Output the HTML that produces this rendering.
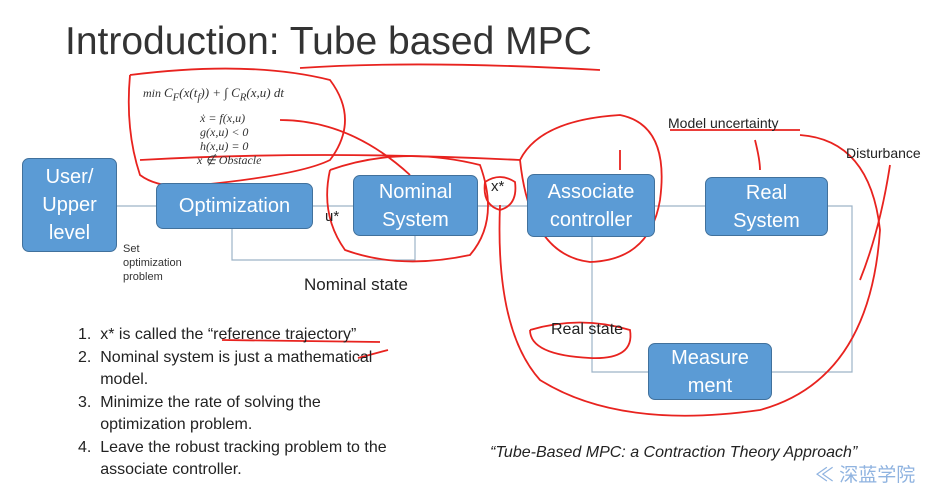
<!DOCTYPE html>
<html><head><meta charset="utf-8"><style>
body{margin:0;width:943px;height:484px;background:#fff;overflow:hidden;position:relative;font-family:"Liberation Sans",sans-serif}
.t{position:absolute;white-space:nowrap}
.b{position:absolute;background:#5b9bd5;border:1px solid #41719c;border-radius:7px;color:#fff;font-size:20px;text-align:center;display:flex;align-items:center;justify-content:center;line-height:28px;box-sizing:border-box}
.m{position:absolute;white-space:nowrap;font-family:"Liberation Serif",serif;font-style:italic;font-size:12px;color:#333;line-height:13px}
</style></head><body>
<div class="t" style="left:65px;top:20px;font-size:39px;color:#333">Introduction: Tube based MPC</div>
<svg style="position:absolute;left:0;top:0" width="943" height="484">
<g stroke="#9db3c8" stroke-width="1.2" fill="none">
<line x1="117" y1="206" x2="156" y2="206"/><line x1="313" y1="206" x2="353" y2="206"/>
<line x1="478" y1="206" x2="527" y2="206"/><line x1="655" y1="206" x2="705" y2="206"/>
<polyline points="828,206 852,206 852,372 772,372"/><polyline points="648,372 592,372 592,237"/>
<polyline points="415,236 415,260 232,260 232,229"/>
</g>
<g stroke="#e8231f" stroke-width="1.8" fill="none">
<path d="M300 68 Q420 60 600 70"/>
<path d="M130 75 Q250 60 330 80 Q360 120 330 160 Q300 175 200 185 Q160 190 140 175 Q125 130 130 75"/>
<path d="M140 160 Q320 150 520 160"/>
<path d="M280 120 Q350 120 410 175"/>
<path d="M330 170 Q400 145 480 165 Q500 220 470 255 Q400 270 345 250 Q320 215 330 170"/>
<path d="M485 182 Q500 172 515 182 Q518 205 500 210 Q482 205 485 182"/>
<path d="M520 160 Q540 120 620 115 Q670 125 660 200 Q650 260 590 262 Q530 255 520 160"/>
<path d="M500 205 Q495 330 540 380 Q620 430 760 410 Q870 380 880 230 Q870 140 800 135"/>
<path d="M530 330 Q580 315 630 330 Q635 360 590 358 Q530 355 530 330"/>
<path d="M620 150 L620 170 M755 140 Q760 160 760 170 M890 165 Q880 230 860 280"/>
<path d="M222 340 L380 342 M670 130 L800 130 M358 358 L388 350"/>
</g>
</svg>
<div class="m" style="left:143px;top:86px">min <span style="font-size:13px">C<sub>F</sub>(x(t<sub>f</sub>)) + ∫ C<sub>R</sub>(x,u) dt</span></div>
<div class="m" style="left:200px;top:112px">ẋ = f(x,u)</div>
<div class="m" style="left:200px;top:126px">g(x,u) &lt; 0</div>
<div class="m" style="left:200px;top:140px">h(x,u) = 0</div>
<div class="m" style="left:197px;top:154px">x ∉ Obstacle</div>
<div class="b" style="left:22px;top:158px;width:95px;height:94px">User/<br>Upper<br>level</div>
<div class="b" style="left:156px;top:183px;width:157px;height:46px">Optimization</div>
<div class="b" style="left:353px;top:175px;width:125px;height:61px">Nominal<br>System</div>
<div class="b" style="left:527px;top:174px;width:128px;height:63px">Associate<br>controller</div>
<div class="b" style="left:705px;top:177px;width:123px;height:59px">Real<br>System</div>
<div class="b" style="left:648px;top:343px;width:124px;height:57px">Measure<br>ment</div>
<div class="t" style="left:123px;top:242px;font-size:11px;line-height:14px;color:#333">Set<br>optimization<br>problem</div>
<div class="t" style="left:325px;top:208px;font-size:15px;color:#222">u*</div>
<div class="t" style="left:491px;top:178px;font-size:15px;color:#222">x*</div>
<div class="t" style="left:304px;top:275px;font-size:17px;color:#222">Nominal state</div>
<div class="t" style="left:551px;top:321px;font-size:16px;color:#222">Real state</div>
<div class="t" style="left:668px;top:115px;font-size:14px;color:#222">Model uncertainty</div>
<div class="t" style="left:846px;top:145px;font-size:14px;color:#222">Disturbance</div>
<div class="t" style="left:78px;top:324px;font-size:16px;line-height:22.5px;color:#222">
1.&nbsp; x* is called the “reference trajectory”<br>
2.&nbsp; Nominal system is just a mathematical<br>&nbsp;&nbsp;&nbsp;&nbsp; model.<br>
3.&nbsp; Minimize the rate of solving the<br>&nbsp;&nbsp;&nbsp;&nbsp; optimization problem.<br>
4.&nbsp; Leave the robust tracking problem to the<br>&nbsp;&nbsp;&nbsp;&nbsp; associate controller.</div>
<div class="t" style="left:490px;top:444px;font-size:16px;font-style:italic;color:#222">“Tube-Based MPC: a Contraction Theory Approach”</div>
<div class="t" style="left:815px;top:460px;font-size:19px;color:#8fb3e0;font-family:'Liberation Sans','Noto Sans CJK SC',sans-serif">≪ 深蓝学院</div>
</body></html>
